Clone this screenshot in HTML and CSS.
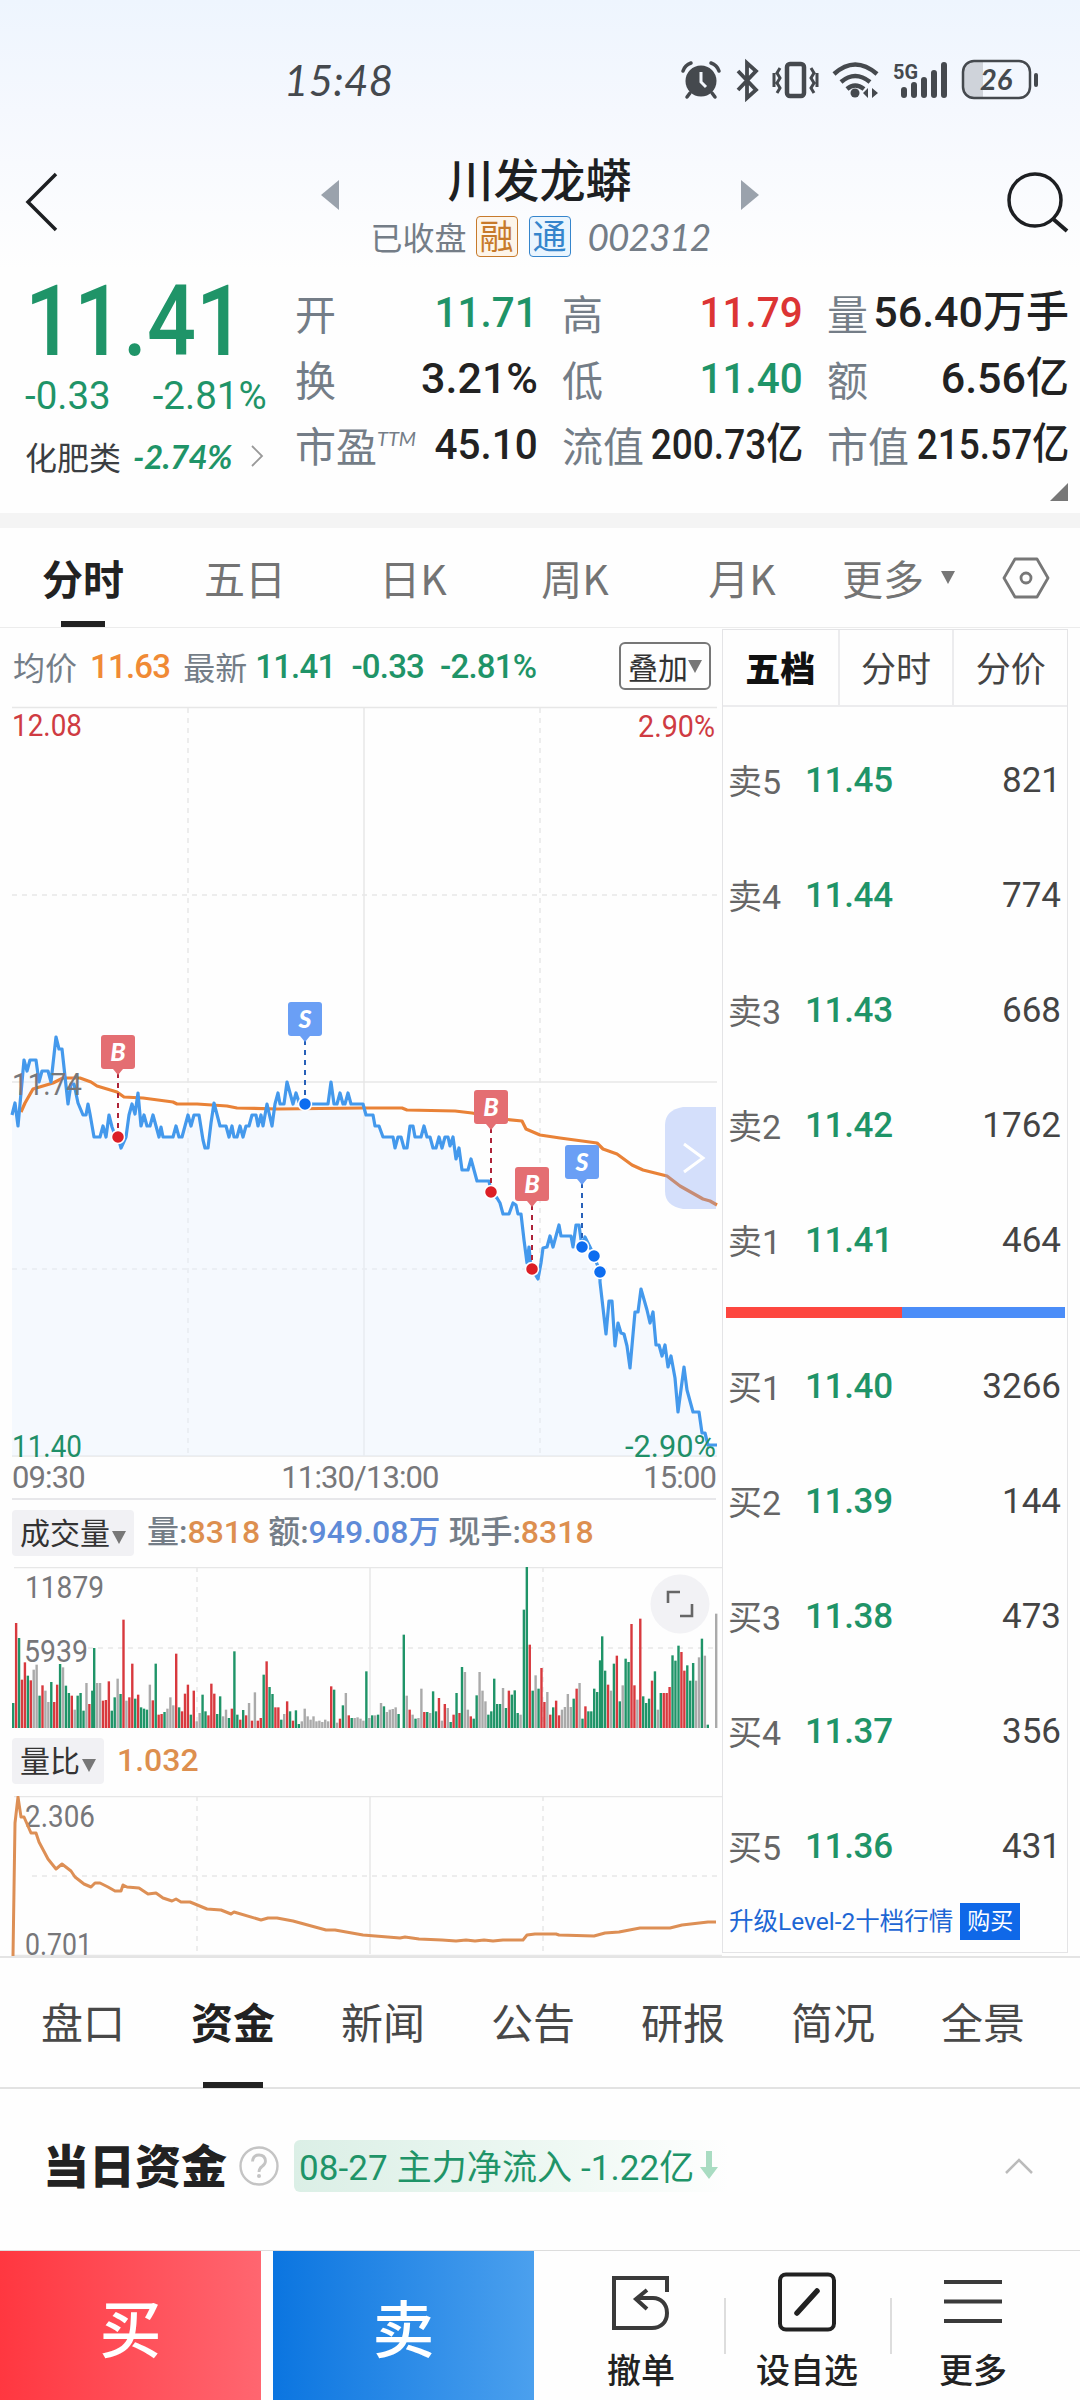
FILE: index.html
```
<!DOCTYPE html>
<html lang="zh-CN">
<head>
  <meta charset="UTF-8" />
  <meta name="viewport" content="width=device-width, initial-scale=1.0" />
  <title>川发龙蟒 002312</title>
  <link rel="stylesheet" href="styles.css">
</head>
<body>
<div class="top">
  <div class="status">
    <span class="clock">15:48</span>
    <svg class="status-icons" width="360" height="44" viewBox="680 58 360 44">
      <!-- alarm -->
      <circle cx="701" cy="81" r="15.5" fill="#45494e"/>
      <path d="M683 71q2-6 8-8M719 71q-2-6-8-8M690 93l-3 4M712 93l3 4" fill="none" stroke="#45494e" stroke-width="3.5" stroke-linecap="round"/>
      <path d="M701 72v10l5 5" fill="none" stroke="#f3f7fd" stroke-width="3"/>
      <!-- bluetooth -->
      <path d="M738 71l18 19-9 8V63l9 8-18 19" fill="none" stroke="#45494e" stroke-width="3.8"/>
      <!-- vibrate -->
      <rect x="787" y="64" width="17" height="32" rx="3" fill="none" stroke="#45494e" stroke-width="4.5"/>
      <path d="M780 68l-3 5 3 5-3 5 3 5-3 5M811 68l3 5-3 5 3 5-3 5 3 5M774 73v14M817 73v14" fill="none" stroke="#45494e" stroke-width="3"/>
      <!-- wifi -->
      <path d="M834 74q21-19 43 0M841 82q14-12 29 0M847 89q8-7 17 0" fill="none" stroke="#45494e" stroke-width="4.5"/>
      <circle cx="855" cy="93" r="4.5" fill="#45494e"/>
      <path d="M868 88v10l-5-5zM872 88v10l6-5z" fill="#45494e"/>
      <!-- signal -->
      <text x="893" y="79" class="net" textLength="25" lengthAdjust="spacingAndGlyphs">5G</text>
      <path d="M904 90v5M914 85v10M924 80v15M934 73v22M944 65v30" fill="none" stroke="#45494e" stroke-width="6" stroke-linecap="round"/>
      <!-- battery -->
      <path d="M973 61h10v37h-10q-10 0-10-10V71q0-10 10-10z" fill="#cfd3da"/>
      <rect x="963" y="61" width="67" height="37" rx="11" fill="none" stroke="#45494e" stroke-width="2.5"/>
      <path d="M1036 75v10" stroke="#45494e" stroke-width="4" stroke-linecap="round"/>
      <text x="980" y="90" class="battery">26</text>
    </svg>
  </div>

  <div class="header">
    <svg width="36" height="62" viewBox="0 0 36 62"><path d="M32 3L4 31l28 28" fill="none" stroke="#1d1f22" stroke-width="3.5"/></svg>
    <div class="stock">
      <div class="stock-row">
        <svg width="18" height="30" viewBox="0 0 18 30"><path d="M18 0v30L0 15z" fill="#9aa2ac"/></svg>
        <h1>川发龙蟒</h1>
        <svg width="18" height="30" viewBox="0 0 18 30"><path d="M0 0v30l18-15z" fill="#9aa2ac"/></svg>
      </div>
      <div class="stock-sub">
        <span>已收盘</span>
        <span class="tag tag-orange">融</span>
        <span class="tag tag-blue">通</span>
        <span class="code">002312</span>
      </div>
    </div>
    <svg width="64" height="62" viewBox="0 0 64 62"><circle cx="29" cy="29" r="26" fill="none" stroke="#1d1f22" stroke-width="3.5"/><path d="M46 47l15 13" stroke="#1d1f22" stroke-width="4"/></svg>
  </div>

  <div class="quote">
    <div class="price-box green">
      <div class="price">11.41</div>
      <div class="change"><span>-0.33</span><span>-2.81%</span></div>
      <div class="sector">
        <span class="sector-name">化肥类</span><span class="sector-pct">-2.74%</span>
        <svg width="14" height="22" viewBox="0 0 14 22"><path d="M2 1l10 10L2 21" fill="none" stroke="#999" stroke-width="1.8"/></svg>
      </div>
    </div>
    <div class="stats">
      <div class="stat"><label>开</label><b class="green snug">11.71</b></div>
      <div class="stat"><label>高</label><b class="red snug">11.79</b></div>
      <div class="stat"><label>量</label><b>56.40万手</b></div>
      <div class="stat"><label>换</label><b>3.21%</b></div>
      <div class="stat"><label>低</label><b class="green snug">11.40</b></div>
      <div class="stat"><label>额</label><b>6.56亿</b></div>
      <div class="stat"><label>市盈<sup>TTM</sup></label><b class="snug">45.10</b></div>
      <div class="stat"><label>流值</label><b class="tight">200.73亿</b></div>
      <div class="stat"><label>市值</label><b class="tight">215.57亿</b></div>
    </div>
  </div>
  <div class="corner"></div>
</div>

<div class="period-tabs">
  <div class="tab active">分时</div>
  <div class="tab">五日</div>
  <div class="tab">日K</div>
  <div class="tab">周K</div>
  <div class="tab">月K</div>
  <div class="tab">更多</div>
  <i class="down"></i>
  <svg width="48" height="42" viewBox="0 0 48 42"><path d="M13 2h22l11 19-11 19H13L2 21z" fill="none" stroke="#777" stroke-width="2.8" stroke-linejoin="round"/><circle cx="24" cy="21" r="5" fill="none" stroke="#777" stroke-width="2.8"/></svg>
</div>

<div class="main">
  <div class="charts">
    <div class="info-row">
      <span class="label">均价</span><span class="num orange">11.63</span>
      <span class="label latest">最新</span><span class="num green">11.41</span>
      <span class="num green gap">-0.33</span><span class="num green gap">-2.81%</span>
      <div class="overlay-btn">叠加<i class="down"></i></div>
    </div>

    <svg class="price-chart" width="722" height="750" viewBox="0 707 722 750">
      <g class="grid">
        <path d="M12 707.5H717M12 1082H717M12 1456H717M364 708V1456"/>
        <path class="dash" d="M12 895H717M12 1269H717M188 708V1456M540 708V1456"/>
      </g>
      <polygon id="area" class="area"/>
      <polyline id="avg" class="line avg" points="21,1112 25,1103 33,1089 43,1086 53,1083 63,1078 80,1078 91,1082 97,1086 117,1092 124,1097 143,1098 173,1102 177,1104 197,1104 227,1106 237,1108 277,1109 363,1108 402,1108 407,1110 455,1111 472,1113 503,1119 522,1121 526,1129 540,1135 560,1138 597,1143 603,1149 617,1154 632,1165 643,1170 667,1176 680,1186 703,1199 710,1201 717,1205"/>
      <polyline id="price" class="line price-line" points="12,1115 15,1103 18,1126 24,1060 27,1071 30,1060 36,1060 39,1082 42,1071 48,1071 51,1082 56,1037 59,1049 62,1049 68,1104 71,1084 74,1084 78,1103 83,1115 86,1115 88,1104 90,1114 94,1137 100,1137 103,1126 106,1137 109,1115 112,1127 115,1135 118,1137 121,1148 126,1137 129,1115 132,1104 135,1114 138,1093 141,1126 144,1115 147,1126 150,1126 153,1115 159,1137 161,1127 163,1137 173,1137 176,1126 179,1137 182,1137 188,1115 191,1126 194,1115 199,1115 203,1140 205,1148 208,1148 211,1123 214,1103 220,1126 226,1126 229,1137 232,1126 234,1137 237,1137 240,1126 243,1137 246,1126 249,1126 252,1115 256,1115 258,1126 261,1115 263,1126 267,1104 272,1126 275,1104 278,1093 280,1104 284,1104 287,1082 293,1104 296,1093 299,1102 305,1104 328,1104 331,1082 334,1104 337,1104 340,1093 343,1104 345,1104 348,1093 351,1104 363,1104 366,1115 373,1115 375,1126 379,1126 383,1137 393,1137 395,1148 398,1137 401,1137 404,1148 407,1148 410,1126 413,1126 415,1137 421,1137 424,1126 427,1137 430,1137 433,1148 436,1148 439,1137 442,1148 445,1137 448,1137 450,1146 453,1137 456,1159 459,1148 462,1170 468,1170 471,1159 477,1181 489,1181 491,1192 497,1198 500,1203 503,1214 509,1214 513,1203 516,1205 518,1214 521,1214 524,1240 527,1263 529,1247 531,1267 532,1269 538,1279 541,1263 543,1248 547,1247 550,1236 553,1247 559,1225 561,1236 571,1236 573,1247 576,1225 579,1225 582,1247 585,1237 590,1247 594,1256 600,1272 600,1282 606,1334 609,1301 612,1301 615,1346 618,1323 621,1333 624,1334 627,1346 630,1368 635,1312 638,1312 641,1289 647,1310 650,1323 653,1312 656,1345 659,1345 662,1356 665,1345 668,1367 671,1356 675,1378 678,1412 684,1367 687,1390 693,1412 699,1412 702,1433 705,1433 708,1445 717,1445"/>
      <text x="12" y="736" class="axis up" textLength="70" lengthAdjust="spacingAndGlyphs">12.08</text>
      <text x="638" y="737" class="axis up" textLength="77" lengthAdjust="spacingAndGlyphs">2.90%</text>
      <text x="12" y="1095" class="axis mid" textLength="70" lengthAdjust="spacingAndGlyphs">11.74</text>
      <text x="12" y="1457" class="axis dn" textLength="70" lengthAdjust="spacingAndGlyphs">11.40</text>
      <text x="625" y="1457" class="axis dn" textLength="91" lengthAdjust="spacingAndGlyphs">-2.90%</text>
      <g id="marks"></g>
      <path d="M716 1107h-33q-18 3-18 18v66q0 15 18 18h33z" fill="#7fa2f5" fill-opacity=".33"/>
      <path d="M684 1144l19 14-19 14" fill="none" stroke="#fff" stroke-width="3"/>
    </svg>
    <div class="times"><span>09:30</span><span class="noon">11:30/13:00</span><span>15:00</span></div>

    <div class="sub-head">
      <span class="picker">成交量<i class="down"></i></span>
      <span class="sub-text">量:<em class="tan">8318</em> 额:<em class="blue">949.08万</em> 现手:<em class="tan">8318</em></span>
    </div>
    <svg class="vol-chart" width="722" height="163" viewBox="0 1567 722 163">
      <g class="grid"><path d="M14 1567.5H722M370 1567V1728"/><path class="dash" d="M88 1648H717M197 1567V1728M543 1567V1728"/></g>
      <g id="bars"></g>
      <text x="25" y="1598" class="axis mid" textLength="79" lengthAdjust="spacingAndGlyphs">11879</text>
      <text x="24" y="1662" class="axis mid" textLength="64" lengthAdjust="spacingAndGlyphs">5939</text>
      <circle cx="680" cy="1604" r="29.5" fill="#f1f1f4" fill-opacity=".9"/>
      <path d="M668 1603v-11h12M692 1604v12h-12" fill="none" stroke="#666" stroke-width="2.6"/>
    </svg>

    <div class="sub-head ratio-head">
      <span class="picker">量比<i class="down"></i></span>
      <span class="sub-text"><em class="tan">1.032</em></span>
    </div>
    <svg class="ratio-chart" width="722" height="161" viewBox="0 1796 722 161">
      <g class="grid"><path d="M14 1796.5H722M12 1955.5H722M370 1796V1954"/><path class="dash" d="M32 1876H722M197 1796V1954M543 1796V1954"/></g>
      <text x="25" y="1827" class="axis mid" textLength="70" lengthAdjust="spacingAndGlyphs">2.306</text>
      <text x="25" y="1955" class="axis mid" textLength="67" lengthAdjust="spacingAndGlyphs">0.701</text>
      <polyline class="line ratio-line" points="13,1956 15,1823 18,1797 21,1817 24,1817 31,1833 36,1833 39,1842 48,1859 56,1869 62,1864 71,1871 75,1877 84,1884 91,1887 95,1883 100,1883 108,1887 115,1891 121,1891 123,1885 127,1887 139,1888 148,1894 156,1893 163,1898 172,1901 176,1899 181,1902 190,1902 207,1909 221,1910 231,1914 234,1912 261,1920 268,1918 277,1918 293,1921 326,1930 335,1930 363,1935 400,1938 405,1937 419,1939 442,1940 456,1941 466,1940 475,1941 484,1940 493,1941 503,1940 523,1940 527,1935 535,1934 556,1934 559,1935 594,1936 605,1933 619,1932 640,1928 670,1928 682,1925 708,1922 716,1922"/>
    </svg>
  </div>

  <div class="book">
    <div class="book-tabs"><span class="on">五档</span><span>分时</span><span>分价</span></div>
    <div class="orders sells">
      <div class="order"><span>卖5</span><b>11.45</b><i>821</i></div>
      <div class="order"><span>卖4</span><b>11.44</b><i>774</i></div>
      <div class="order"><span>卖3</span><b>11.43</b><i>668</i></div>
      <div class="order"><span>卖2</span><b>11.42</b><i>1762</i></div>
      <div class="order"><span>卖1</span><b>11.41</b><i>464</i></div>
    </div>
    <div class="ratio-bar"></div>
    <div class="orders buys">
      <div class="order"><span>买1</span><b>11.40</b><i>3266</i></div>
      <div class="order"><span>买2</span><b>11.39</b><i>144</i></div>
      <div class="order"><span>买3</span><b>11.38</b><i>473</i></div>
      <div class="order"><span>买4</span><b>11.37</b><i>356</i></div>
      <div class="order"><span>买5</span><b>11.36</b><i>431</i></div>
    </div>
    <div class="level2">升级Level-2十档行情<span>购买</span></div>
  </div>
</div>

<div class="news-tabs">
  <span>盘口</span><span class="active">资金</span><span>新闻</span><span>公告</span><span>研报</span><span>简况</span><span>全景</span>
</div>

<div class="fund">
  <h2>当日资金</h2>
  <svg width="42" height="42" viewBox="0 0 42 42"><circle cx="21" cy="21" r="18.5" fill="none" stroke="#c4c4c4" stroke-width="2.4"/><path d="M14.5 16.5q.5-6.500 6.500-6.500t6.500 6q0 3-3.500 5.500-3 2-3 5.500" fill="none" stroke="#c4c4c4" stroke-width="2.8"/><circle cx="21" cy="31" r="2" fill="#c4c4c4"/></svg>
  <div class="flow">08-27 主力净流入 -1.22亿<svg width="18" height="28" viewBox="0 0 18 28"><path d="M6 0h6v16h6l-9 12-9-12h6z" fill="#a9dcc2"/></svg></div>
  <svg class="fold" width="30" height="20" viewBox="0 0 30 20"><path d="M2 17L15 4l13 13" fill="none" stroke="#bbb" stroke-width="2.5"/></svg>
</div>

<div class="footer">
  <div class="trade buy">买</div>
  <div class="trade sell">卖</div>
  <div class="actions">
    <div class="action">
      <svg width="60" height="60" viewBox="0 0 60 60"><path d="M56 20V6H3v50h38c9 0 15-6 15-15s-6-15-14-15H26M36 18l-11 9 11 10" fill="none" stroke="#3a3a3a" stroke-width="4"/></svg>
      <span>撤单</span>
    </div>
    <div class="action">
      <svg width="60" height="60" viewBox="0 0 60 60"><rect x="3" y="2.500" width="54" height="55" rx="6" fill="none" stroke="#222" stroke-width="4"/><path d="M20 41l20-22" stroke="#222" stroke-width="5.500" stroke-linecap="round"/></svg>
      <span>设自选</span>
    </div>
    <div class="action">
      <svg width="60" height="60" viewBox="0 0 60 60"><path d="M1 10h58M1 29.500h58M1 49h58" stroke="#3a3a3a" stroke-width="4"/></svg>
      <span>更多</span>
    </div>
  </div>
</div>

<script>
  const BASE_VOL = 1728;
  const colors = { r: '#d8393e', g: '#1f9468', a: '#aaaaaa' };

  // each run: start x, then color + height for every minute
  const runs = [
    [13, 'g75 r315 g270 r145 r197 g157 r143 a175 a190 g97 r128 a112 a78 g138 r78 r130 g192 a182 g127 g105 r97 a55 g97 g105 g52 a135 r72 g112'],
    [94, 'g240 a135 a135 r82 r84 r140 g52 g92 a148 g102 r325 a82 r92 r193 g88 r100 g62 g58 g55 a130 r83 g193 r40 r42 g48 a58 a92 a68'],
    [176, 'r223 g62 r50 r103 r130 g40 r112 a20 a45 g100 g50 r38 r133 r103 g42 g95 a35 a55 g30 r58'],
    [234.2, 'g230 g40 r25 g54 r38 a75 r22 a107 r22 r30 g160 r200 g123 g102 r62 r62 g25 a42 r80 g50 r22 g53 g12 a20 a58 a35 a25 a35 a20 a22 a18 a25 a20'],
    [331, 'r125 g115 a16 r28 g68 a105 r38 g30 a30 a32 a28 a22 g170 a30 g38 a38 g40 a75 g65 a48 a55 a57 a62 g42'],
    [403.6, 'g280 a97 r55 a40 g28 a30 a118 r48 g48 a45 g110 g50 r90 a22 r72 a60 g18 r40 g105 r45'],
    [461.8, 'g183 a168 a55 r35 g28 g98 a168 a112 a80 g40 g50 g148 g72 g72 a120 g60 r112 g100 g113 g45 a40'],
    [523.7, 'g355 g485 r250 g112 a158 g118 r180 r78 a108 r40 g62 r82 r38 a55 a63 a102 a63 g88 r118 a135 g28 r65 g50 g50 g118 g108 g203'],
    [602, 'g275 g172 r130 a112 g193 r217 g80 a128 g208 g198 r312 r128 a85 r328 g95 g75 g88 r142 g170 a55 g105 r105 r105 r123 g218 g202'],
    [678.3, 'g247 r228 r172 g188 g142 g195 a142 a212 g268 a217 g10'],
    [716, 'a343']
  ];

  let bars = '';
  runs.forEach(([start, list]) => {
    list.split(' ').forEach((item, i) => {
      const h = item.slice(1) / 3;
      bars += `<rect x="${start + i * 2.93 - 1}" y="${BASE_VOL - h}" width="2.4" height="${h}" fill="${colors[item[0]]}"/>`;
    });
  });
  document.getElementById('bars').innerHTML = bars;

  const pts = document.getElementById('price').getAttribute('points');
  document.getElementById('area').setAttribute('points', `12,1456 ${pts} 717,1456`);

  // buy / sell marks: type, x, box top, dot y
  const marks = [['B', 118, 1035, 1137], ['S', 305, 1002, 1104], ['B', 491, 1090, 1192], ['B', 532, 1167, 1269], ['S', 582, 1145, 1247]];
  const dot = (x, y, c) => `<circle cx="${x}" cy="${y}" r="6.5" fill="${c}" stroke="#fff" stroke-width="1.5"/>`;
  let out = '';
  marks.forEach(([t, x, top, y]) => {
    const buy = t === 'B';
    const box = buy ? '#e46e72' : '#6a9ff5';
    out += `<path d="M${x} ${top + 38}V${y}" stroke="${buy ? '#ad2338' : '#2860b8'}" stroke-width="2" stroke-dasharray="5 5"/>`
      + `<rect x="${x - 17}" y="${top}" width="34" height="34" rx="3" fill="${box}"/>`
      + `<path d="M${x - 5} ${top + 34}h10l-5 6z" fill="${box}"/>`
      + `<text x="${x}" y="${top + 26}" class="mark">${t}</text>`
      + dot(x, y, buy ? '#dc1f26' : '#0d6df0');
  });
  out += dot(594, 1256, '#0d6df0') + dot(600, 1272, '#0d6df0');
  document.getElementById('marks').innerHTML = out;
</script>
</body>
</html>
```
FILE: styles.css
```
* { box-sizing: border-box; margin: 0; padding: 0; }

body {
  width: 1080px;
  height: 2400px;
  overflow: hidden;
  background: #fefefe;
  color: #222;
  font-family: "Noto Sans CJK SC", sans-serif;
  line-height: 1;
}
svg { display: block; flex: none; }
i, em { font-style: normal; }

.green { color: #1f9468; }
.red { color: #dc3434; }
.orange { color: #f08a35; }
.tan { color: #dd8f4f; }
.blue { color: #5f8bd8; }

.top {
  height: 528px;
  background: linear-gradient(#eef5fe, #f5f8fe 110px, #fefefe 270px);
  border-bottom: 15px solid #f4f4f4;
  position: relative;
}

.status {
  height: 155px;
  padding: 58px 40px 0 284px;
  display: flex;
  justify-content: space-between;
}
.clock {
  font: italic 42px/44px Lato, sans-serif;
  letter-spacing: .3px;
  color: #45494e;
}
.net { font: bold 21px Roboto, sans-serif; fill: #45494e; }
.battery { font: italic bold 29px Lato, sans-serif; fill: #45494e; }

.header {
  height: 115px;
  padding: 0 10px 0 24px;
  display: flex;
  justify-content: space-between;
}
.header > svg { margin-top: 16px; }
.stock { width: 438px; margin-left: 13px; }
.stock-row {
  height: 58px;
  display: flex;
  justify-content: space-between;
  align-items: flex-end;
}
.stock-row svg { margin-bottom: 3px; }
.stock-row h1 { font-size: 46px; font-weight: 500; line-height: 50px; margin-bottom: 11px; color: #1d1f22; }
.stock-sub {
  height: 46px;
  padding-left: 50px;
  display: flex;
  align-items: center;
  font-size: 32px;
  color: #747d87;
}
.tag {
  width: 42px;
  height: 41px;
  margin-left: 9px;
  border: 1.5px solid;
  border-radius: 4px;
  font-size: 34px;
  line-height: 36px;
  text-align: center;
}
.tag-orange { color: #c77a2b; background: #fdf5ea; }
.tag-blue { color: #3585cc; background: #eaf5fe; margin-left: 11px; }
.code { font: italic 37px Lato, sans-serif; margin-left: 17px; letter-spacing: -1px; }

.quote { display: flex; }
.price-box { width: 295px; padding-left: 25px; }
.price {
  font: 500 98px/104px Roboto, sans-serif;
  height: 102px;
  transform: scaleX(.88);
  transform-origin: left;
}
.change {
  display: flex;
  gap: 42px;
  font: 38.5px/48px Roboto, sans-serif;
}
.sector { display: flex; align-items: center; height: 72px; }
.sector-name { font-size: 32px; color: #3b3e42; margin-right: 12px; }
.sector-pct { font: italic bold 33px Lato, sans-serif; width: 117px; letter-spacing: -.5px; }

.stats {
  width: 774px;
  padding-top: 9px;
  display: grid;
  grid-template-columns: 243px 241px 242px;
  grid-auto-rows: 66px;
  column-gap: 24px;
}
.stat { display: flex; justify-content: space-between; align-items: center; white-space: nowrap; min-width: 0; }
.stat label { font-size: 41px; color: #747d87; }
.stat label sup { font: italic 20px Lato, sans-serif; vertical-align: 16px; }
.stat b {
  font: 500 43px/60px Roboto, "Noto Sans CJK SC", sans-serif;
  transform-origin: right;
}
.stat .snug { transform: scaleX(.94); }
.stat .tight { margin-left: -30px; transform: scaleX(.86); }
.corner {
  position: absolute;
  right: 12px;
  bottom: 12px;
  border: 9px solid transparent;
  border-right-color: #777;
  border-bottom-color: #777;
}

.period-tabs {
  height: 100px;
  border-bottom: 1px solid #ececec;
  display: grid;
  grid-template-columns: 166px 158px 178px 146px 188px 94px 36px 1fr;
  align-items: center;
  text-align: center;
  font-size: 41px;
  color: #747474;
}
.tab { height: 99px; line-height: 98px; }
.tab.active { color: #222; font-weight: bold; }
.tab.active::after, .news-tabs .active::after {
  content: "";
  display: block;
  width: 44px;
  height: 6px;
  margin: -5px auto 0;
  background: #222;
}
.down {
  display: inline-block;
  justify-self: center;
  border: 7px solid transparent;
  border-top: 13px solid #777;
  border-bottom: 0;
}
.period-tabs svg { margin-left: 36px; }

.main { display: flex; height: 1330px; border-bottom: 2px solid #e4e4e4; }
.charts { width: 722px; }
.info-row {
  height: 79px;
  padding: 0 11px 3px 13px;
  display: flex;
  align-items: center;
  font-size: 32px;
}
.label { color: #747d87; width: 77px; }
.label.latest { margin-left: 13px; width: 72px; }
.num { font: 500 33px Roboto, sans-serif; letter-spacing: -.8px; }
.gap { margin-left: 16px; }
.overlay-btn {
  margin-left: auto;
  width: 92px;
  height: 48px;
  border: 2px solid #777;
  border-radius: 6px;
  display: flex;
  align-items: center;
  justify-content: center;
  font-size: 30px;
  color: #333;
}
.price-chart { overflow: visible; }
.grid path { fill: none; stroke: #e7e7e7; stroke-width: 1.5; }
.grid .dash { stroke-dasharray: 5 5; }
.area { fill: #eaf2fe; fill-opacity: .42; }
.line { fill: none; stroke-width: 3.2; stroke-linejoin: round; }
.avg { stroke: #e98237; }
.price-line { stroke: #4499ec; }
.ratio-line { stroke: #dd8f55; stroke-width: 3; }
.axis { font: 31px Roboto, sans-serif; }
.axis.up { fill: #cf3b42; }
.axis.dn { fill: #1f8f68; }
.axis.mid { fill: #77777a; }
.mark { font: italic 900 25px Lato, sans-serif; fill: #fff; text-anchor: middle; }

.times {
  height: 43px;
  margin: 0 6px 0 12px;
  border-bottom: 2px solid #e7e7ea;
  display: flex;
  justify-content: space-between;
  font: 31px/42px Roboto, sans-serif;
  letter-spacing: -.9px;
  color: #77777a;
}
.noon { margin-right: 8px; }
.sub-head {
  height: 67px;
  padding: 10px 12px;
  display: flex;
  align-items: flex-start;
}
.ratio-head { height: 66px; padding-top: 8px; }
.picker {
  height: 46px;
  padding: 0 8px;
  background: #f1f1f4;
  border-radius: 4px;
  font-size: 30px;
  line-height: 42px;
  color: #333;
  white-space: nowrap;
}
.picker .down { margin-left: 2px; }
.sub-text {
  margin-left: 13px;
  font: 500 32px/45px Roboto, "Noto Sans CJK SC", sans-serif;
  color: #747d87;
  white-space: nowrap;
}

.book {
  width: 346px;
  height: 1324px;
  margin-top: 1px;
  border: 1.5px solid #e4e4e6;
}
.book-tabs {
  height: 77px;
  border-bottom: 2px solid #ececee;
  display: grid;
  grid-template-columns: repeat(3, 1fr);
  font-size: 35px;
  line-height: 74px;
  text-align: center;
  color: #444;
}
.book-tabs span + span { border-left: 2px solid #ececee; }
.book-tabs .on { font-weight: 900; color: #111; }
.sells { padding-top: 16px; height: 600px; }
.buys { padding-top: 11px; height: 585px; }
.order {
  height: 115px;
  padding: 0 6px 0 5px;
  display: flex;
  align-items: center;
  font: 35px Roboto, "Noto Sans CJK SC", sans-serif;
}
.order span { width: 77px; color: #666; font-size: 34px; margin-top: -3px; }
.order b { font-weight: 500; color: #1f9468; letter-spacing: -.3px; }
.order i { margin-left: auto; color: #444; }
.ratio-bar {
  height: 11px;
  margin: 0 2px 0 3px;
  background: linear-gradient(90deg, #fd463f 52%, #4b8df8 52%);
}
.level2 {
  display: flex;
  align-items: center;
  padding-left: 6px;
  font: 24.5px/37px Roboto, "Noto Sans CJK SC", sans-serif;
  color: #1d66d4;
  white-space: nowrap;
}
.level2 span { width: 60px; margin-left: 7px; background: #0f68e8; color: #fff; text-align: center; font-size: 23px; }

.news-tabs {
  height: 131px;
  border-bottom: 2px solid #e2e2e2;
  padding: 0 22px 0 8px;
  display: grid;
  grid-template-columns: repeat(7, 1fr);
  text-align: center;
  font-size: 42px;
  line-height: 125px;
  color: #484848;
}
.news-tabs .active { color: #222; font-weight: bold; }
.news-tabs .active::after { width: 60px; margin-top: -1px; }

.fund {
  height: 161px;
  padding: 0 46px 7px 43px;
  display: flex;
  align-items: center;
}
.fund h2 { font-size: 46px; font-weight: 900; width: 195px; margin-top: -7px; }
.flow {
  width: 435px;
  height: 52px;
  margin-left: 14px;
  padding: 0 0 3px 5px;
  border-radius: 6px;
  background: linear-gradient(90deg, #dbefe6, #eef8f3 60%, #fefefe);
  display: flex;
  align-items: center;
  gap: 6px;
  font: 35px Roboto, "Noto Sans CJK SC", sans-serif;
  letter-spacing: .1px;
  color: #1f9468;
  white-space: nowrap;
}
.fold { margin-left: auto; }

.footer { display: flex; height: 150px; border-top: 1px solid #ddd; }
.trade {
  width: 261px;
  margin-right: 12px;
  font-size: 62px;
  font-weight: 500;
  line-height: 150px;
  text-align: center;
  color: #fff;
}
.buy { background: linear-gradient(90deg, #ff3740, #ff6670); }
.sell { background: linear-gradient(90deg, #0b75e0, #4ba0ee); }
.actions {
  flex: 1;
  padding-left: 12px;
  display: grid;
  grid-template-columns: 166px 166px 166px;
}
.action {
  display: flex;
  flex-direction: column;
  align-items: center;
  padding-top: 21px;
  font-size: 34px;
  font-weight: 500;
}
.action span { margin-top: 20px; }
.action + .action {
  background: linear-gradient(#ddd, #ddd) left 47px / 2px 56px no-repeat;
}
```
